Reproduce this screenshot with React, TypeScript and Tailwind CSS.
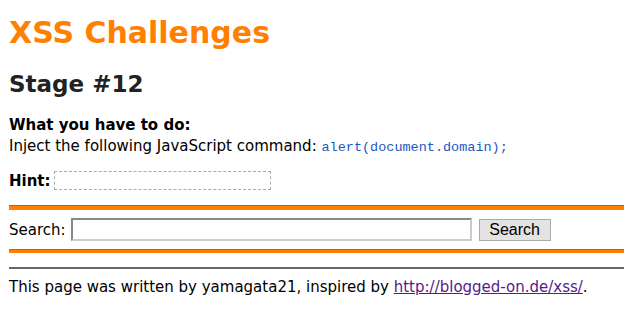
export default function App() {
  return (
    <div className="w-[624px] h-[310px] bg-white pl-[9px] pt-[16px] text-[15px] text-black overflow-hidden" style={{ fontFamily: '"DejaVu Sans", Verdana, sans-serif' }}>
      <h1 className="text-[30px] font-bold leading-[34px] text-[#ff8000]">XSS Challenges</h1>
      <h2 className="mt-[20px] text-[23px] font-bold leading-[28px] text-[#222]">Stage #12</h2>
      <div className="mt-[17px] leading-[21px]">
        <div className="font-bold">What you have to do:</div>
        <div>
          Inject the following JavaScript command:{" "}
          <span className="text-[13.5px] text-[#1d58c4]" style={{ fontFamily: '"Liberation Mono", monospace' }}>alert(document.domain);</span>
        </div>
      </div>
      <div className="mt-[13px] flex items-center h-[19px] leading-[18px]">
        <span className="font-bold">Hint:</span>
        <span className="ml-[3px] w-[217px] h-[19px] border border-dashed border-[#aaa]"></span>
      </div>
      <div className="mt-[15px] h-[5px] border-t border-[#c86000] bg-[#ff8000]" />
      <div className="flex items-center h-[39px] leading-[18px]">
        <span>Search:</span>
        <input className="ml-[5px] w-[401px] h-[23px] border-2 border-t-[#888] border-l-[#888] border-b-[#ccc] border-r-[#ccc] bg-white" />
        <button className="ml-[7px] w-[72px] h-[22px] border border-[#aaa] bg-[#e3e3e3] text-[16px] leading-[18px]" style={{ fontFamily: '"Liberation Sans", Arial, sans-serif' }}>Search</button>
      </div>
      <div className="h-[4px] border-t border-[#c86000] bg-[#ff8000]" />
      <div className="mt-[14px] h-[2px] bg-[#666]" />
      <div className="mt-[9px] leading-[18px]">
        This page was written by yamagata21, inspired by{" "}
        <a href="#" className="text-[#551a8b] underline">http://blogged-on.de/xss/</a>.
      </div>
    </div>
  );
}
